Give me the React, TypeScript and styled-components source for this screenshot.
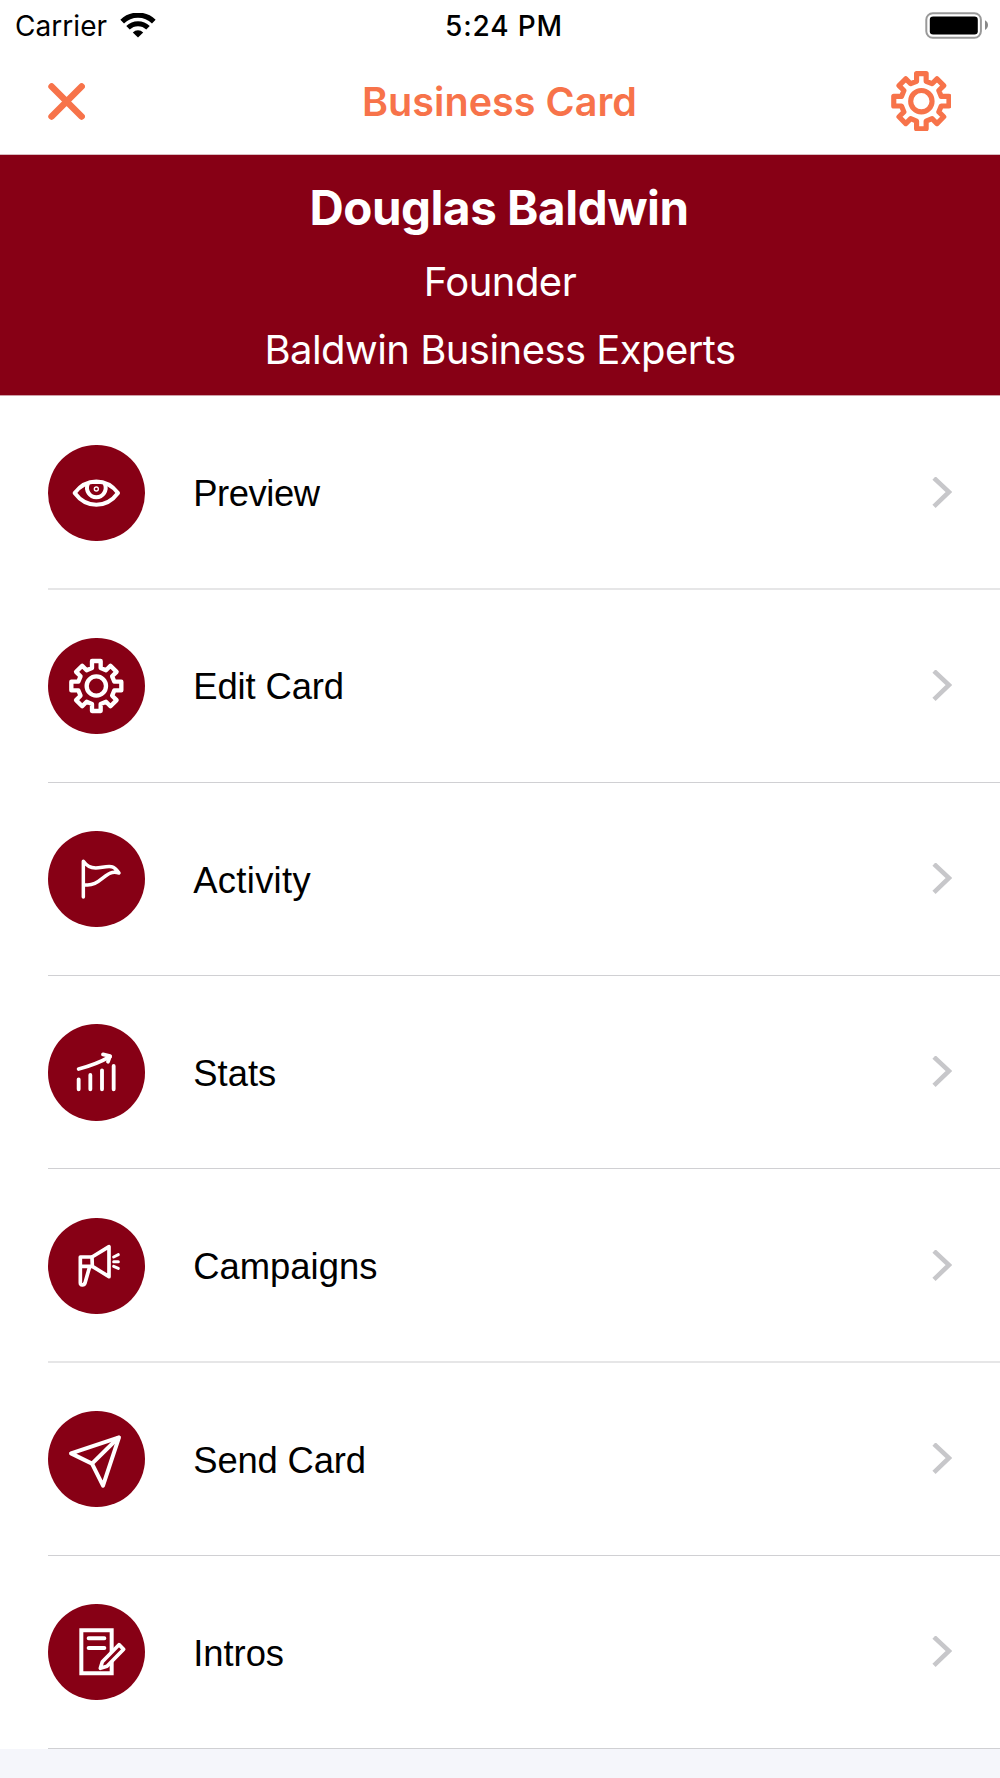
import React from "react";
import styled, { createGlobalStyle } from "styled-components";

const MAROON = "#870015";
const ORANGE = "#f7734a";

const GlobalStyle = createGlobalStyle`
  *, *::before, *::after { box-sizing: border-box; }
  html, body { margin: 0; padding: 0; background: #f5f6fb; }
`;

const Screen = styled.main`
  width: 1000px;
  height: 1778px;
  overflow: hidden;
  display: flex;
  flex-direction: column;
  background: #f5f6fb;
  font-family: Inter, "Liberation Sans", sans-serif;
`;

const StatusBar = styled.div`
  display: grid;
  grid-template-columns: 1fr auto 1fr;
  align-items: center;
  height: 51px;
  padding: 0 11px 0 15px;
  background: #fff;
  color: #000;
`;

const Carrier = styled.div`
  display: flex;
  align-items: center;
  gap: 13px;
  font-size: 28px;
  line-height: 34px;
  letter-spacing: 0.05px;
`;

const Clock = styled.div`
  font-size: 28px;
  line-height: 34px;
  font-weight: 500;
  letter-spacing: 0.85px;
  padding-left: 4px;
`;

const BatterySlot = styled.div`
  display: flex;
  justify-content: flex-end;
`;

const NavBar = styled.header`
  display: grid;
  grid-template-columns: 60px 1fr 60px;
  align-items: center;
  height: 103px;
  padding: 0 49px 3px 48px;
  background: #fff;
  color: ${ORANGE};
`;

const IconButton = styled.button`
  display: flex;
  align-items: center;
  padding: 0;
  border: 0;
  background: none;
  color: inherit;
`;

const Title = styled.h1`
  margin: 0;
  padding-top: 2px;
  text-align: center;
  font-size: 39.5px;
  line-height: 48px;
  font-weight: 600;
  letter-spacing: 0.05px;
`;

const Banner = styled.section`
  display: flex;
  flex-direction: column;
  align-items: center;
  height: 242px;
  padding-top: 16px;
  border-top: 1px solid #d9bcc1;
  border-bottom: 1px solid #cf9fa7;
  background: ${MAROON};
  background-clip: padding-box;
  color: #fff;
`;

const Name = styled.div`
  margin-bottom: 3px;
  padding-right: 2px;
  font-size: 47.5px;
  line-height: 74px;
  font-weight: 700;
  letter-spacing: -0.45px;
`;

const Detail = styled.div`
  font-size: 40px;
  line-height: 68px;
  letter-spacing: -0.55px;
`;

const Menu = styled.ul`
  margin: 0;
  padding: 0;
  list-style: none;
  background: #fff;
`;

const Row = styled.li`
  display: flex;
  flex-direction: column;
  height: 193.285px;
  padding-left: 48px;
`;

const RowBody = styled.a`
  flex: 1;
  display: flex;
  align-items: center;
  padding: 1px 48.5px 0 0.4px;
`;

const Separator = styled.div<{ $soft?: boolean }>`
  height: 1px;
  background: ${(p) => (p.$soft ? "#e6e6e7" : "#d0d0d3")};
  box-shadow: ${(p) => (p.$soft ? "0 1px 0 #e6e6e7" : "none")};
`;

const Badge = styled.span`
  display: flex;
  align-items: center;
  justify-content: center;
  flex: none;
  width: 96.2px;
  height: 96.2px;
  border-radius: 50%;
  background: ${MAROON};
`;

const Label = styled.span<{ $tracking: number }>`
  flex: 1;
  margin-left: 48.7px;
  padding-top: 3px;
  color: #000;
  font-family: "Liberation Sans", Arial, sans-serif;
  font-size: 36.4px;
  line-height: 44px;
  letter-spacing: ${(p) => p.$tracking}px;
`;

const Glyph = ({ children, width = 11 }: { children: React.ReactNode; width?: number }) => (
  <svg
    width="96"
    height="96"
    viewBox="-145 -144 288 288"
    fill="none"
    stroke="#fff"
    strokeWidth={width}
    strokeLinecap="round"
    strokeLinejoin="round"
  >
    {children}
  </svg>
);

// Outline of an eight-toothed cog: each tooth is rotated 45 degrees from the last.
const cogPath = (() => {
  const points: string[] = [];
  for (let i = 0; i < 8; i++) {
    const a = (i * Math.PI) / 4;
    const tip = i % 2 ? 73 : 75;
    for (const [x, y] of [[-13, -54], [-13, -tip], [13, -tip], [13, -54]]) {
      const px = x * Math.cos(a) - y * Math.sin(a);
      const py = x * Math.sin(a) + y * Math.cos(a);
      points.push(`${px.toFixed(1)} ${py.toFixed(1)}`);
    }
  }
  return `M${points.join("L")}Z`;
})();

const Cog = () => (
  <>
    <path d={cogPath} />
    <circle r="29" />
  </>
);

const Eye = () => (
  <Glyph width={12}>
    <path d="M-65 0C-30 -46 30 -46 65 0C30 47 -30 47 -65 0Z" />
    <path d="M-26 -26A28 28 0 1 0 26 -26" />
    <path d="M-21 -30H21" strokeWidth="6" />
    <circle cx="0" cy="-12" r="6" strokeWidth="4" />
  </Glyph>
);

const Flag = () => (
  <Glyph width={10.5}>
    <path d="M-39 54V-53C-28 -37 -18 -33 -2 -33C14 -33 30 -40 46 -37C56 -35 62 -27 68 -18C46 -24 36 -16 21 -4C5 9 -12 22 -37 17" />
  </Glyph>
);

const Chart = () => (
  <Glyph width={11.5}>
    <path d="M-53 22V52M-18 9V52M17 -5V52M52 -18V52" />
    <path d="M-53 -9C-18 -18 8 -27 41 -46" />
    <path d="M20 -53L41 -48L35 -31" />
  </Glyph>
);

const Megaphone = () => (
  <Glyph width={11}>
    <path d="M-13 -27L38 -58V32L-12 1Z" />
    <path d="M-13 -27H-48V50C-48 58 -37 59 -34 51L-20 2M-48 1H-13" />
    <path d="M52 -27L66 -34M52 -12.5H66M52 1L66 7" strokeWidth="9" />
  </Glyph>
);

const PaperPlane = () => (
  <Glyph width={12}>
    <path d="M68 -65L-76 -17L-13 14L20 80Z" />
    <path d="M-13 14L65 -63" />
  </Glyph>
);

const Note = () => (
  <Glyph width={12}>
    <path d="M-45 -65H46V64H-45Z" strokeLinejoin="miter" />
    <path d="M-23 -41H24M-23 -12H24" />
    <path d="M12 49L18 29L68 -22L82 -8L32 43Z" strokeWidth="11" fill={MAROON} />
  </Glyph>
);

const EditCog = () => (
  <Glyph width={13}>
    <Cog />
  </Glyph>
);

const items = [
  { label: "Preview", Icon: Eye, tracking: -0.45, soft: true },
  { label: "Edit Card", Icon: EditCog, tracking: -0.12 },
  { label: "Activity", Icon: Flag, tracking: 0.3 },
  { label: "Stats", Icon: Chart, tracking: 0 },
  { label: "Campaigns", Icon: Megaphone, tracking: 0, soft: true },
  { label: "Send Card", Icon: PaperPlane, tracking: -0.15 },
  { label: "Intros", Icon: Note, tracking: -0.05 },
];

export default function App() {
  return (
    <Screen>
      <GlobalStyle />
      <StatusBar>
        <Carrier>
          Carrier
          <svg width="36" height="26" viewBox="0 0 36 26" fill="none" stroke="#000">
            <path d="M2.2 8.6A22.6 22.6 0 0 1 33.8 8.6" strokeWidth="5.2" />
            <path d="M8 14.7A14.4 14.4 0 0 1 28 14.7" strokeWidth="5" />
            <path d="M12.8 19.4A7.6 7.6 0 0 1 23.2 19.4L18 24.4Z" fill="#000" stroke="none" />
          </svg>
        </Carrier>
        <Clock>5:24 PM</Clock>
        <BatterySlot>
          <svg width="64" height="28" viewBox="925 11 64 28">
            <rect x="926.3" y="12.2" width="54.6" height="24.6" rx="6.5" fill="none" stroke="#999" strokeWidth="2" />
            <rect x="929.8" y="15.4" width="48" height="18.2" rx="3.3" fill="#000" />
            <path d="M985 19.3C989 21.3 989 27 985 29Z" fill="#888" />
          </svg>
        </BatterySlot>
      </StatusBar>
      <NavBar>
        <IconButton aria-label="Close">
          <svg width="37" height="37" viewBox="48 82.5 37 37" stroke={ORANGE} strokeWidth="6.6" strokeLinecap="round">
            <path d="M51.6 86L81.6 116M81.6 86L51.6 116" />
          </svg>
        </IconButton>
        <Title>Business Card</Title>
        <IconButton aria-label="Settings">
          <svg
            width="60"
            height="60"
            viewBox="-82.5 -82 163 163"
            fill="none"
            stroke={ORANGE}
            strokeWidth="14"
            strokeLinejoin="round"
          >
            <Cog />
          </svg>
        </IconButton>
      </NavBar>
      <Banner>
        <Name>Douglas Baldwin</Name>
        <Detail>Founder</Detail>
        <Detail>Baldwin Business Experts</Detail>
      </Banner>
      <Menu>
        {items.map(({ label, Icon, tracking, soft }) => (
          <Row key={label}>
            <RowBody>
              <Badge>
                <Icon />
              </Badge>
              <Label $tracking={tracking}>{label}</Label>
              <svg width="20" height="32" viewBox="0 0 20 32" fill="none" stroke="#c7c7ca" strokeWidth="4.6">
                <path d="M2 1L17 15L2 29.3" />
              </svg>
            </RowBody>
            <Separator $soft={soft} />
          </Row>
        ))}
      </Menu>
    </Screen>
  );
}
